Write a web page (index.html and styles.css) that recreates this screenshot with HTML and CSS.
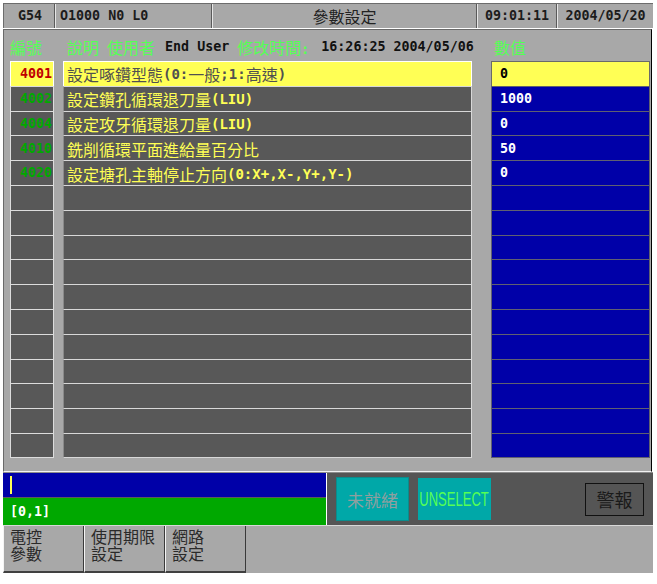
FILE: index.html
```html
<!DOCTYPE html>
<html lang="zh-Hant">
<head>
<meta charset="utf-8">
<title>參數設定</title>
<link rel="stylesheet" href="styles.css">
</head>
<body>
<div class="screen">
  <div class="topbar">
    <div class="tcell c-g m">G54</div>
    <div class="tcell c-o m">O1000 N0 L0</div>
    <div class="tcell c-title">參數設定</div>
    <div class="tcell c-time m">09:01:11</div>
    <div class="tcell c-date m">2004/05/20</div>
  </div>

  <div class="panel">
    <div class="head">
      <div class="h-no">編號</div>
      <div class="h-desc">
        <span>說明</span>
        <span>使用者</span>
        <span class="m black eu">End User</span>
        <span class="mt">修改時間<span class="m">:</span></span>
        <span class="m black tm">16:26:25 2004/05/06</span>
      </div>
      <div class="h-val">數值</div>
    </div>

    <div class="grid">
      <div class="cell no sel m">4001</div>
      <div class="cell desc sel">設定啄鑽型態<span class="m d">(0:</span>一般<span class="m d">;1:</span>高速<span class="m d">)</span></div>
      <div class="cell val sel m">0</div>

      <div class="cell no m">4002</div>
      <div class="cell desc">設定鑽孔循環退刀量<span class="m d">(LIU)</span></div>
      <div class="cell val m">1000</div>

      <div class="cell no m">4004</div>
      <div class="cell desc">設定攻牙循環退刀量<span class="m d">(LIU)</span></div>
      <div class="cell val m">0</div>

      <div class="cell no m">4010</div>
      <div class="cell desc">銑削循環平面進給量百分比</div>
      <div class="cell val m">50</div>

      <div class="cell no m">4020</div>
      <div class="cell desc">設定塘孔主軸停止方向<span class="m d">(0:X+,X-,Y+,Y-)</span></div>
      <div class="cell val m">0</div>

      <div class="cell no"></div><div class="cell desc"></div><div class="cell val"></div>
      <div class="cell no"></div><div class="cell desc"></div><div class="cell val"></div>
      <div class="cell no"></div><div class="cell desc"></div><div class="cell val"></div>
      <div class="cell no"></div><div class="cell desc"></div><div class="cell val"></div>
      <div class="cell no"></div><div class="cell desc"></div><div class="cell val"></div>
      <div class="cell no"></div><div class="cell desc"></div><div class="cell val"></div>
      <div class="cell no"></div><div class="cell desc"></div><div class="cell val"></div>
      <div class="cell no"></div><div class="cell desc"></div><div class="cell val"></div>
      <div class="cell no"></div><div class="cell desc"></div><div class="cell val"></div>
      <div class="cell no"></div><div class="cell desc"></div><div class="cell val"></div>
      <div class="cell no"></div><div class="cell desc"></div><div class="cell val"></div>
    </div>
  </div>

  <div class="bottom">
    <div class="inputs">
      <div class="cmd"><span class="cursor"></span></div>
      <div class="msg m">[0,1]</div>
    </div>
    <div class="status">
      <div class="sbtn notready">未就緒</div>
      <div class="sbtn unsel"><span class="narrow">UNSELECT</span></div>
      <div class="alarm">警報</div>
    </div>
  </div>

  <div class="softkeys">
    <div class="key"><div class="kl">電控</div><div class="kl">參數</div></div>
    <div class="key"><div class="kl">使用期限</div><div class="kl">設定</div></div>
    <div class="key"><div class="kl">網路</div><div class="kl">設定</div></div>
  </div>
</div>
</body>
</html>
```

FILE: styles.css
```css
* { box-sizing: border-box; }
html, body { margin: 0; padding: 0; background: #ffffff; }
body {
  font-family: "Noto Sans CJK TC", "Noto Sans CJK SC", sans-serif;
  font-size: 16px;
  color: #202020;
}

.m {
  font-family: "DejaVu Sans Mono", "Liberation Mono", monospace;
  font-size: 13.33px;
  font-weight: bold;
}
.m.d { font-size: 14px; }

.screen { width: 650px; margin: 3px 0 0 3px; }

/* ---------- top bar ---------- */
.topbar {
  display: flex;
  height: 25px;
  background: #a8a8a8;
  border-top: 1px solid #6c6c6c;
}
.tcell {
  display: flex;
  align-items: center;
  justify-content: center;
  border-left: 1px solid #e6e6e6;
  border-right: 1px solid #5a5a5a;
  color: #1c1c1c;
  line-height: 1;
}
.c-g { width: 52px; border-left-color: #6c6c6c; padding-left: 2px; }
.c-o { width: 157px; justify-content: flex-start; padding-left: 4px; }
.c-title { width: 265px; font-size: 16px; font-weight: normal; color: #222; }
.c-time { width: 80px; }
.c-date { width: 96px; border-right: none; }

/* ---------- main panel ---------- */
.panel {
  margin-top: 1px;
  width: 649px;
  background: #a8a8a8;
  border-top: 1px solid #6a6a6a;
  border-left: 1px solid #6a6a6a;
  border-right: 1px solid #000000;
  border-bottom: 1px solid #f2f2f2;
  padding: 0 1px 13px 6px;
}
.head {
  height: 31px;
  display: flex;
  align-items: center;
  color: #55ff55;
  padding-top: 2px;
}
.h-no { width: 53px; }
.h-desc { width: 428px; padding-left: 4px; display: flex; align-items: center; gap: 8px; }
.h-desc .eu { margin-left: 2px; }
.h-desc .tm { margin-left: 4px; }
.black { color: #111111; }
.h-val { padding-left: 3px; }

.grid {
  display: grid;
  grid-template-columns: 44px 9px 409px 19px 159px;
  grid-template-rows: repeat(16, 24.8px);
  height: 397px;
}
.cell {
  display: flex;
  align-items: center;
  border-style: solid;
  border-width: 1px 1px 0 1px;
  line-height: 1;
  white-space: nowrap;
  overflow: hidden;
}
.cell:nth-last-child(-n+3) { border-bottom-width: 1px; }

.no {
  grid-column: 1;
  background: #585858;
  border-color: #dcdcdc;
  color: #00a800;
  justify-content: flex-end;
  padding-right: 1px;
}
.desc {
  grid-column: 3;
  background: #585858;
  border-color: #d8d8d8;
  border-left-color: #8a8a8a;
  color: #ffff55;
  padding-left: 3px;
  padding-top: 1px;
}
.val {
  grid-column: 5;
  background: #0000a8;
  border-color: #606070;
  color: #ffffff;
  padding-left: 8px;
}
.no.sel { background: #ffff55; color: #c00000; border-color: #ffffff; }
.desc.sel { background: #ffff55; color: #505050; border-color: #ffffff; }
.val.sel { background: #ffff55; color: #000000; border-color: #6a6a6a; }

/* ---------- bottom status ---------- */
.bottom {
  display: flex;
  height: 53px;
  border-top: 1px solid #8c8c8c;
}
.inputs {
  width: 324px;
  display: flex;
  flex-direction: column;
  border-right: 1px solid #ffffff;
  background: #3a3a3a;
}
.cmd {
  height: 25px;
  background: #0000a8;
  border-bottom: 1px solid #5a5a5a;
  padding: 3px 0 0 7px;
}
.cursor { display: block; width: 2px; height: 18px; background: #ffff55; }
.msg {
  flex: 1;
  background: #00a800;
  color: #ffffff;
  display: flex;
  align-items: center;
  padding-left: 7px;
}
.status {
  flex: 1;
  background: #555555;
  display: flex;
  align-items: center;
  gap: 9px;
  padding: 0 9px;
}
.sbtn {
  width: 73px;
  background: #00a8a8;
  display: flex;
  align-items: center;
  justify-content: center;
}
.notready { height: 44px; color: #8f9f9f; font-size: 17px; border: 1px solid #0a8c8c; }
.unsel { height: 42px; color: #55ff55; overflow: hidden; }
.narrow {
  display: inline-block;
  font-family: "Liberation Sans", sans-serif;
  font-size: 21px;
  transform: scaleX(0.62);
  letter-spacing: 0;
}
.alarm {
  margin-left: auto;
  width: 59px;
  height: 33px;
  border: 1px solid #111111;
  display: flex;
  align-items: center;
  justify-content: center;
  font-size: 18px;
  color: #1a1a1a;
}

/* ---------- soft keys ---------- */
.softkeys {
  display: flex;
  height: 48px;
  background: #a8a8a8;
  border-top: 1px solid #d8d8d8;
}
.key {
  width: 81px;
  border-left: 1px solid #f4f4f4;
  border-right: 1px solid #3a3a3a;
  border-bottom: 2px solid #404040;
  padding: 2px 0 0 6px;
  color: #2a2a2a;
  background: #a8a8a8;
}
.kl { height: 17px; font-size: 16px; line-height: 17px; }
```
